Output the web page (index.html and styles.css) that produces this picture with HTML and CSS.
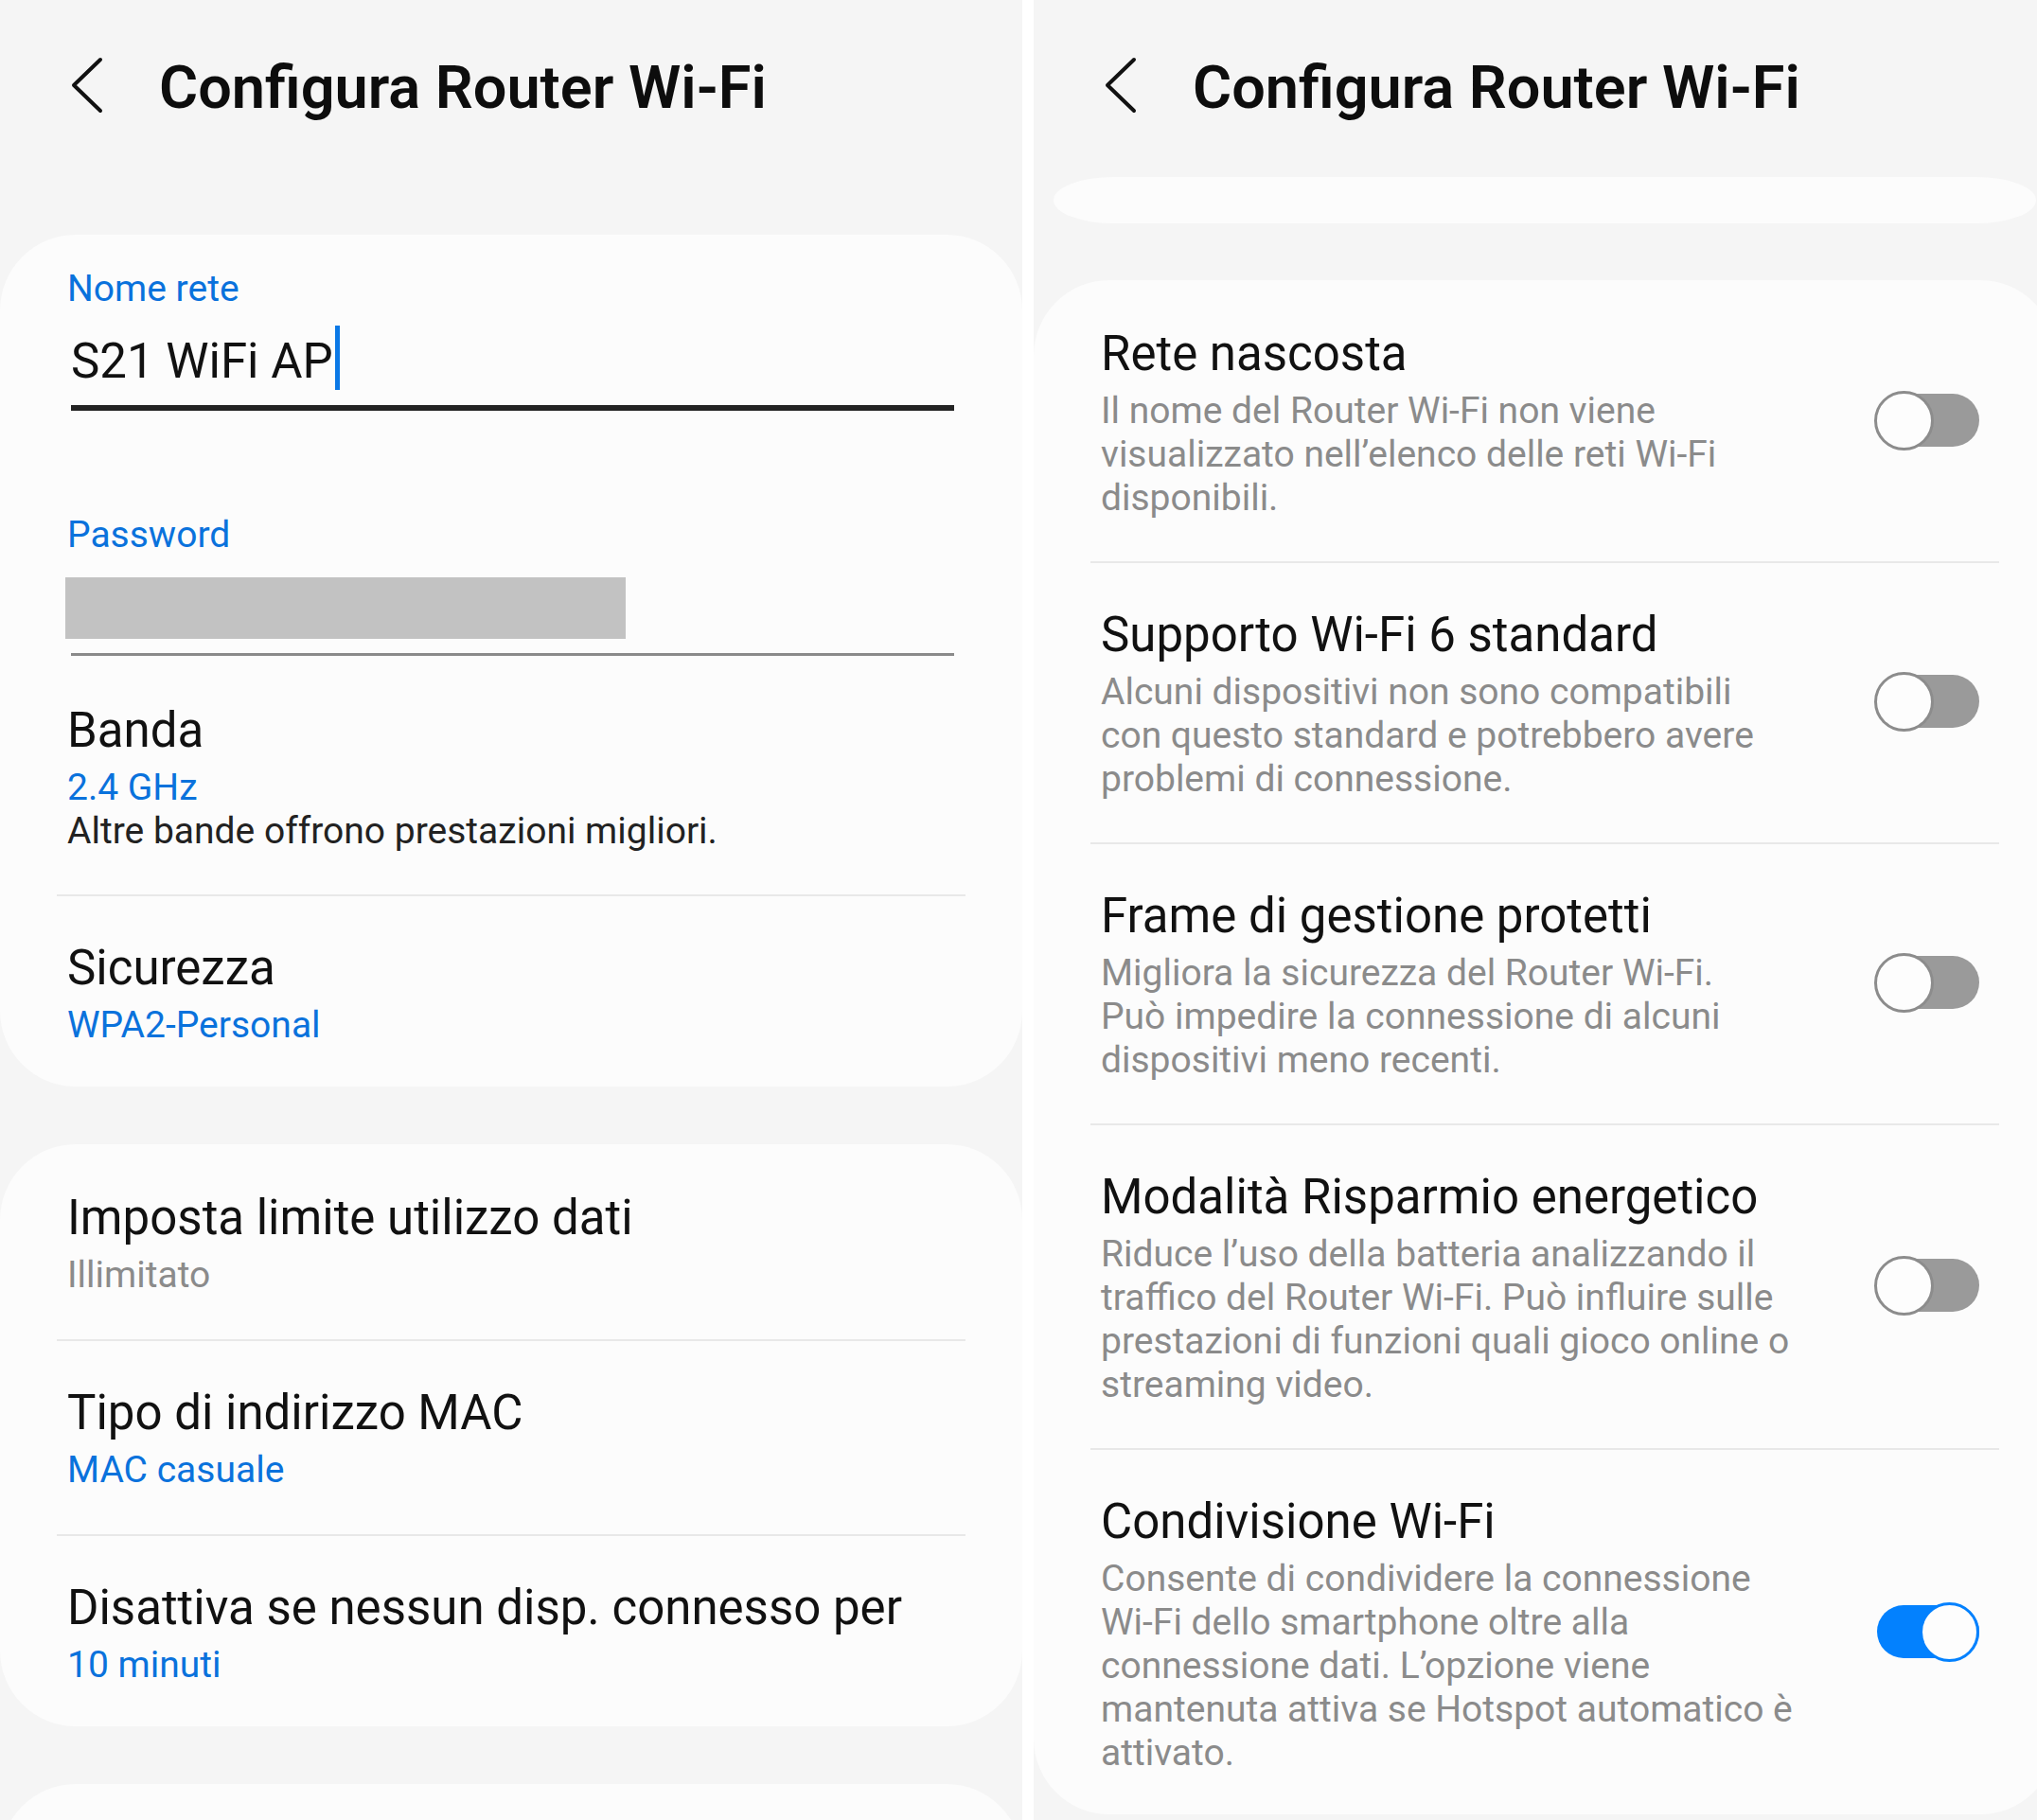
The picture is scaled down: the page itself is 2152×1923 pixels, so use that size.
FILE: index.html
```html
<!DOCTYPE html>
<html lang="it">
<head>
<meta charset="utf-8">
<title>Configura Router Wi-Fi</title>
<link rel="stylesheet" href="styles.css">
</head>
<body>
<div class="screens">
  <section class="panel">
    <header class="appbar">
      <svg class="back" width="44" height="60" viewBox="0 0 44 60"><path d="M36 3 L8 30 L36 57" fill="none" stroke="#111" stroke-width="4" stroke-linecap="round" stroke-linejoin="round"/></svg>
      <h1 class="appbar-title">Configura Router Wi-Fi</h1>
    </header>

    <div class="card card-first">
      <div class="field field-name">
        <div class="field-label">Nome rete</div>
        <div class="field-input">S21 WiFi AP<span class="caret"></span></div>
        <div class="field-line field-line-active"></div>
      </div>
      <div class="field field-pass">
        <div class="field-label">Password</div>
        <div class="redacted"></div>
        <div class="field-line"></div>
      </div>
      <div class="item item-band">
        <div class="item-title">Banda</div>
        <div class="item-sub blue">2.4 GHz</div>
        <div class="item-note">Altre bande offrono prestazioni migliori.</div>
      </div>
      <div class="item item-last">
        <div class="item-title">Sicurezza</div>
        <div class="item-sub blue">WPA2-Personal</div>
      </div>
    </div>

    <div class="card card-gap">
      <div class="item item-top">
        <div class="item-title">Imposta limite utilizzo dati</div>
        <div class="item-sub gray">Illimitato</div>
      </div>
      <div class="item">
        <div class="item-title">Tipo di indirizzo MAC</div>
        <div class="item-sub blue">MAC casuale</div>
      </div>
      <div class="item item-last">
        <div class="item-title">Disattiva se nessun disp. connesso per</div>
        <div class="item-sub blue">10 minuti</div>
      </div>
    </div>

    <div class="card card-gap card-tail"></div>
  </section>

  <section class="panel">
    <header class="appbar">
      <svg class="back" width="44" height="60" viewBox="0 0 44 60"><path d="M36 3 L8 30 L36 57" fill="none" stroke="#111" stroke-width="4" stroke-linecap="round" stroke-linejoin="round"/></svg>
      <h1 class="appbar-title">Configura Router Wi-Fi</h1>
    </header>

    <div class="strip"></div>

    <div class="card card-toggles">
      <div class="item item-top row">
        <div class="row-text">
          <div class="item-title">Rete nascosta</div>
          <div class="item-sub gray">Il nome del Router Wi-Fi non viene<br>visualizzato nell’elenco delle reti Wi-Fi<br>disponibili.</div>
        </div>
        <div class="switch"><div class="switch-track"></div><div class="switch-thumb"></div></div>
      </div>
      <div class="item row">
        <div class="row-text">
          <div class="item-title">Supporto Wi-Fi 6 standard</div>
          <div class="item-sub gray">Alcuni dispositivi non sono compatibili<br>con questo standard e potrebbero avere<br>problemi di connessione.</div>
        </div>
        <div class="switch"><div class="switch-track"></div><div class="switch-thumb"></div></div>
      </div>
      <div class="item row">
        <div class="row-text">
          <div class="item-title">Frame di gestione protetti</div>
          <div class="item-sub gray">Migliora la sicurezza del Router Wi-Fi.<br>Può impedire la connessione di alcuni<br>dispositivi meno recenti.</div>
        </div>
        <div class="switch"><div class="switch-track"></div><div class="switch-thumb"></div></div>
      </div>
      <div class="item row">
        <div class="row-text">
          <div class="item-title">Modalità Risparmio energetico</div>
          <div class="item-sub gray">Riduce l’uso della batteria analizzando il<br>traffico del Router Wi-Fi. Può influire sulle<br>prestazioni di funzioni quali gioco online o<br>streaming video.</div>
        </div>
        <div class="switch"><div class="switch-track"></div><div class="switch-thumb"></div></div>
      </div>
      <div class="item item-last row">
        <div class="row-text">
          <div class="item-title">Condivisione Wi-Fi</div>
          <div class="item-sub gray">Consente di condividere la connessione<br>Wi-Fi dello smartphone oltre alla<br>connessione dati. L’opzione viene<br>mantenuta attiva se Hotspot automatico è<br>attivato.</div>
        </div>
        <div class="switch switch-on"><div class="switch-track"></div><div class="switch-thumb"></div></div>
      </div>
    </div>
  </section>
</div>
</body>
</html>
```

FILE: styles.css
```css
* { box-sizing: border-box; }

html, body {
  margin: 0;
  padding: 0;
  background: #ffffff;
}

body {
  width: 2152px;
  height: 1923px;
  overflow: hidden;
  font-family: Roboto, "Noto Sans", "Liberation Sans", sans-serif;
  color: #111111;
}

.screens {
  display: flex;
  gap: 12px;
  width: 2152px;
  height: 1923px;
  overflow: hidden;
}

.panel {
  flex: 0 0 1080px;
  width: 1080px;
  height: 1923px;
  background: #f5f5f5;
  overflow: hidden;
}

.appbar {
  display: flex;
  align-items: flex-start;
  padding: 53px 0 0 70px;
  height: 133px;
}

.back {
  flex: 0 0 auto;
  margin-top: 7px;
}

.appbar-title {
  margin: 0 0 0 54px;
  font-size: 63px;
  line-height: 80px;
  font-weight: 600;
  color: #0d0d0d;
  white-space: nowrap;
}

.card {
  background: #fcfcfc;
  border-radius: 80px;
}

.card-first {
  margin-top: 115px;
  padding: 34px 0 0;
}

.card-gap {
  margin-top: 61px;
  padding-top: 2px;
}

.card-tail {
  height: 200px;
}

.field {
  padding: 0 72px 0 71px;
}

.field-label {
  font-size: 39px;
  line-height: 46px;
  color: #0a72dc;
}

.field-input {
  margin-top: 24px;
  padding-left: 4px;
  font-size: 51px;
  line-height: 60px;
  color: #111;
  white-space: nowrap;
}

.caret {
  display: inline-block;
  width: 5px;
  height: 68px;
  margin: -12px 0 0 2px;
  vertical-align: -13px;
  background: #0a78e6;
}

.field-line {
  margin: 15px 0 0 4px;
  height: 3px;
  background: #8a8a8a;
}

.field-line-active {
  margin-top: 16px;
  height: 6px;
  background: #232323;
}

.field-pass {
  margin-top: 108px;
}

.redacted {
  margin: 22px 0 0 -2px;
  width: 592px;
  height: 65px;
  background: #c2c2c2;
}

.item {
  margin: 0 60px;
  padding: 46px 21px 45px 11px;
  border-top: 2px solid #e8e8e8;
}

.item-top {
  border-top: 0;
}

.item-band {
  border-top: 0;
  padding-top: 49px;
  padding-bottom: 44px;
}

.item-last {
  padding-bottom: 42px;
}

.item-title {
  font-size: 51px;
  line-height: 60px;
  color: #111;
  white-space: nowrap;
}

.item-sub {
  margin-top: 7px;
  font-size: 39px;
  line-height: 46px;
  white-space: nowrap;
}

.item-note {
  font-size: 39px;
  line-height: 46px;
  color: #222;
  white-space: nowrap;
}

.blue { color: #0a72dc; }
.gray { color: #8b8b8b; }

.strip {
  margin: 54px 21px 0;
  height: 49px;
  background: #fcfcfc;
  border-radius: 64px / 24.5px;
}

.card-toggles {
  margin-top: 60px;
  padding-top: 2px;
}

.card-toggles .item {
  padding-bottom: 44px;
}

.card-toggles .item-last {
  padding-bottom: 42px;
}

.row {
  display: flex;
  align-items: center;
}

.row-text {
  flex: 1 1 auto;
  min-width: 0;
}

.switch {
  position: relative;
  flex: 0 0 111px;
  width: 111px;
  height: 63px;
  margin-top: -5px;
}

.switch-track {
  margin: 3.5px 0 0 3px;
  width: 108px;
  height: 56px;
  border-radius: 28px;
  background: #9a9a9a;
}

.switch-thumb {
  position: absolute;
  left: 0;
  top: 0;
  width: 63px;
  height: 63px;
  border-radius: 50%;
  background: #fdfdfd;
  border: 3px solid #8c8c8c;
}

.switch-on .switch-track {
  background: #0381fe;
}

.switch-on .switch-thumb {
  left: 48px;
  border-color: #0381fe;
}
```
